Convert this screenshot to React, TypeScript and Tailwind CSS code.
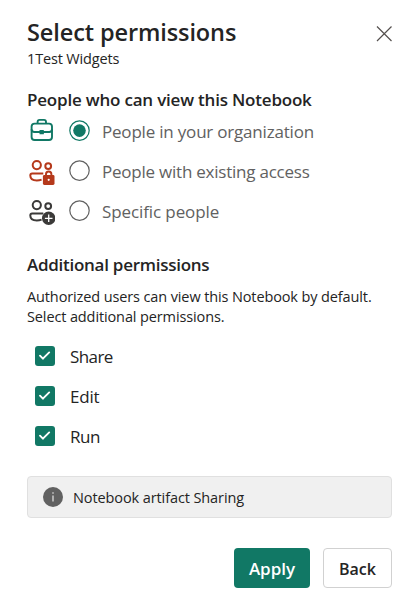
import { useState } from "react";

function BriefcaseIcon() {
  return (
    <svg className="h-7 w-7 shrink-0" viewBox="0.4 -0.3 28 28" fill="none" stroke="#117865" strokeWidth="1.9">
      <rect x="5" y="6.3" width="20.4" height="16.4" rx="3" />
      <path d="M11 6.3V4.6Q11 2.6 13 2.6h4.4Q19.4 2.6 19.4 4.6V6.3M5 12Q5 14.7 7.8 14.7H22.6Q25.4 14.7 25.4 12" />
      <rect x="12.9" y="12.6" width="4.4" height="4.4" rx="0.6" fill="#117865" stroke="none" />
    </svg>
  );
}

function PeopleBase() {
  return (
    <>
      <circle cx="10" cy="7.8" r="4.1" />
      <circle cx="21.4" cy="8.8" r="2.9" />
      <path d="M16.5 16.3H5.4Q3.5 16.3 3.5 18.2Q3.5 23.1 10 23.1Q12.5 23.1 14.8 22.3" />
    </>
  );
}

function PeopleLockIcon() {
  return (
    <svg className="h-7 w-7 shrink-0" viewBox="0.2 -0.3 28 28" fill="none" stroke="#b5391b" strokeWidth="2">
      <PeopleBase />
      <path d="M19.2 18.5v-1.6a2.7 2.7 0 0 1 5.4 0v1.6" strokeWidth="1.9" />
      <rect x="16.1" y="17.8" width="11.6" height="9.8" rx="1.4" fill="#b5391b" stroke="none" />
      <circle cx="21.9" cy="22.5" r="1.1" fill="white" stroke="none" />
    </svg>
  );
}

function PeopleAddIcon() {
  return (
    <svg className="h-7 w-7 shrink-0" viewBox="0.2 -0.3 28 28" fill="none" stroke="#3b3a39" strokeWidth="2">
      <PeopleBase />
      <circle cx="21.9" cy="21" r="6.7" fill="#3b3a39" stroke="none" />
      <path d="M21.9 17.2v7.6M18.1 21h7.6" stroke="white" strokeWidth="1.3" />
    </svg>
  );
}

const audiences = [
  { label: "People in your organization", Icon: BriefcaseIcon, tracking: "tracking-[-0.2px]" },
  { label: "People with existing access", Icon: PeopleLockIcon, tracking: "tracking-[-0.23px]" },
  { label: "Specific people", Icon: PeopleAddIcon, tracking: "tracking-[-0.1px]" },
];

const permissions = [
  { label: "Share", tracking: "tracking-[-0.6px]" },
  { label: "Edit", tracking: "tracking-[-0.2px]" },
  { label: "Run", tracking: "tracking-[-0.5px]" },
];

export default function App() {
  const [audience, setAudience] = useState(0);
  const [checked, setChecked] = useState([true, true, true]);

  return (
    <main className="h-[614px] w-[417px] bg-white pl-[27px] pr-[25px] pt-4 font-['Open_Sans','Noto_Sans',sans-serif] text-[#242424]">
      <header className="flex h-[54px] justify-between">
        <div>
          <h1 className="h-8 whitespace-nowrap text-[23.5px] font-semibold leading-8 tracking-[-0.1px]">Select permissions</h1>
          <p className="text-[14.5px] leading-[22px] tracking-[-0.16px]">1Test Widgets</p>
        </div>
        <button aria-label="Close" className="mt-2.5 h-4 w-4">
          <svg viewBox="0 0 16 16" className="h-4 w-4" stroke="#55504e" strokeWidth="1.2">
            <path d="M1 .5l14.5 14.5M15.5 .5L1 15" />
          </svg>
        </button>
      </header>

      <section className="pt-[18px]">
        <h2 className="h-[23px] whitespace-nowrap text-[17px] font-semibold leading-6 tracking-[-0.2px]">People who can view this Notebook</h2>
        {audiences.map(({ label, Icon, tracking }, i) => (
          <button key={label} role="radio" aria-checked={audience === i} onClick={() => setAudience(i)} className="flex h-10 w-full items-center text-left">
            <Icon />
            <span className="-mt-px ml-[14px] flex h-[21px] w-[21px] items-center justify-center">
              <svg viewBox="0 0 21 21" className="h-[21px] w-[21px] overflow-visible">
                <circle cx="10.5" cy="10.6" r="9.7" fill="white" stroke={audience === i ? "#117865" : "#616161"} strokeWidth="1.2" />
                {audience === i && <circle cx="10.5" cy="10.6" r="6.3" fill="#117865" />}
              </svg>
            </span>
            <span className={`ml-3 mt-0.5 whitespace-nowrap text-[17px] leading-6 text-[#616161] ${tracking}`}>{label}</span>
          </button>
        ))}
      </section>

      <section className="pt-[22px]">
        <h2 className="h-[34px] text-[17px] font-semibold leading-6 tracking-[-0.27px]">Additional permissions</h2>
        <p className="h-[49px] whitespace-nowrap text-[14.5px] leading-5 tracking-[-0.12px]">
          Authorized users can view this Notebook by default.
          <br />
          Select additional permissions.
        </p>
        {permissions.map(({ label, tracking }, i) => (
          <button
            key={label}
            role="checkbox"
            aria-checked={checked[i]}
            onClick={() => setChecked(checked.map((value, n) => (n === i ? !value : value)))}
            className="flex h-10 w-full items-center pl-2 text-left"
          >
            <span className="flex h-5 w-5 items-center justify-center rounded-[3px] bg-[#117865]">
              {checked[i] && (
                <svg viewBox="0 0 20 20" className="h-5 w-5" fill="none" stroke="white" strokeWidth="1.9" strokeLinecap="round" strokeLinejoin="round">
                  <path d="M5 9.7l2.9 3 6.3-6.3" />
                </svg>
              )}
            </span>
            <span className={`ml-[15px] mt-0.5 text-[17px] leading-6 ${tracking}`}>{label}</span>
          </button>
        ))}
      </section>

      <div className="mt-5 flex h-[42px] items-center rounded border border-[#e0e0e0] bg-[#f0f0f0] pl-[15px]">
        <svg viewBox="0 0 20 20" className="-mt-px h-5 w-5">
          <circle cx="10" cy="10" r="10" fill="#616161" />
          <path d="M10 8.5v6" stroke="#e8e8e8" strokeWidth="1.2" />
          <circle cx="10" cy="6" r=".8" fill="#e8e8e8" />
        </svg>
        <span className="ml-[10px] mt-0.5 text-[14.5px] leading-5 tracking-[-0.1px]">Notebook artifact Sharing</span>
      </div>

      <footer className="mt-[30px] flex justify-end gap-[13px]">
        <button className="h-10 w-[76px] rounded bg-[#117865] pt-0.5 text-[17px] font-semibold text-white">Apply</button>
        <button className="h-10 w-[69px] rounded border border-[#d1d1d1] pt-0.5 text-base font-semibold">Back</button>
      </footer>
    </main>
  );
}
